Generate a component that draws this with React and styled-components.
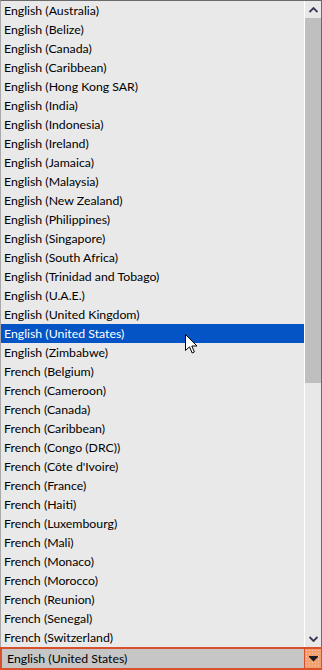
import React from 'react';
import styled, { createGlobalStyle } from 'styled-components';

const GlobalStyle = createGlobalStyle`
  html, body {
    margin: 0;
    padding: 0;
    background: #e9e9e9;
  }
`;

const Frame = styled.div`
  position: relative;
  width: 322px;
  height: 670px;
  display: flex;
  flex-direction: column;
  font-family: "Segoe UI", Lato, "Liberation Sans", sans-serif;
  font-size: 12.3px;
  overflow: hidden;
`;

const ListArea = styled.div`
  display: flex;
  height: 646px;
  border-top: 1px solid #6a6a6a;
  border-left: 1px solid #a8a8a8;
  border-right: 1px solid #6a6a6a;
`;

const List = styled.ul`
  flex: 1;
  margin: 0;
  padding: 0;
  list-style: none;
  background: #e9e9e9;
`;

const Row = styled.li`
  height: 19px;
  line-height: 19px;
  padding-left: 3px;
  white-space: nowrap;
  color: ${(p) => (p.$selected ? '#ffffff' : '#000000')};
  background: ${(p) => (p.$selected ? '#0554c6' : 'transparent')};
`;

const Scrollbar = styled.div`
  width: 16px;
  display: flex;
  flex-direction: column;
  border-left: 1px solid #ffffff;
  background: #e8e8e8;
`;

const ArrowButton = styled.div`
  height: 17px;
  display: flex;
  align-items: center;
  justify-content: center;
`;

const Track = styled.div`
  flex: 1;
  display: flex;
  flex-direction: column;
`;

const Thumb = styled.div`
  height: 365px;
  background: #bfbfbf;
`;

const Combo = styled.div`
  height: 23px;
  display: flex;
  box-sizing: border-box;
  border: 2px solid #d8512c;
  border-right-width: 1px;
  background: #c6c6c6;
`;

const ComboText = styled.div`
  flex: 1;
  padding-left: 5px;
  line-height: 19px;
  color: #000;
`;

const DropButton = styled.div`
  width: 16px;
  display: flex;
  align-items: center;
  justify-content: center;
  border-left: 1px solid #d8512c;
  background-color: #f2a06c;
  background-image: radial-gradient(circle, #f6c0c8 0.6px, transparent 0.9px);
  background-size: 3px 3px;
`;

const Cursor = styled.svg`
  position: absolute;
  left: 185px;
  top: 334px;
`;

const items = [
  'English (Australia)',
  'English (Belize)',
  'English (Canada)',
  'English (Caribbean)',
  'English (Hong Kong SAR)',
  'English (India)',
  'English (Indonesia)',
  'English (Ireland)',
  'English (Jamaica)',
  'English (Malaysia)',
  'English (New Zealand)',
  'English (Philippines)',
  'English (Singapore)',
  'English (South Africa)',
  'English (Trinidad and Tobago)',
  'English (U.A.E.)',
  'English (United Kingdom)',
  'English (United States)',
  'English (Zimbabwe)',
  'French (Belgium)',
  'French (Cameroon)',
  'French (Canada)',
  'French (Caribbean)',
  'French (Congo (DRC))',
  "French (Côte d'Ivoire)",
  'French (France)',
  'French (Haiti)',
  'French (Luxembourg)',
  'French (Mali)',
  'French (Monaco)',
  'French (Morocco)',
  'French (Reunion)',
  'French (Senegal)',
  'French (Switzerland)',
];

const selected = 'English (United States)';

export default function App() {
  return (
    <Frame>
      <GlobalStyle />
      <ListArea>
        <List>
          {items.map((item) => (
            <Row key={item} $selected={item === selected}>
              {item}
            </Row>
          ))}
        </List>
        <Scrollbar>
          <ArrowButton>
            <svg width="9" height="6" viewBox="0 0 9 6">
              <path d="M0.5 5 L4.5 1 L8.5 5" fill="none" stroke="#3b3450" strokeWidth="1.8" />
            </svg>
          </ArrowButton>
          <Track>
            <Thumb />
          </Track>
          <ArrowButton>
            <svg width="9" height="6" viewBox="0 0 9 6">
              <path d="M0.5 1 L4.5 5 L8.5 1" fill="none" stroke="#3b3450" strokeWidth="1.8" />
            </svg>
          </ArrowButton>
        </Scrollbar>
      </ListArea>
      <Combo>
        <ComboText>{selected}</ComboText>
        <DropButton>
          <svg width="9" height="6" viewBox="0 0 9 6">
            <path d="M0 0 H9 V1 L4.5 5.5 L0 1 Z" fill="#1e1a24" />
          </svg>
        </DropButton>
      </Combo>
      <Cursor width="13" height="20" viewBox="0 0 13 20">
        <path
          d="M0.5 0.5 L0.5 16.5 L4.5 12.8 L7.2 19 L9.4 18 L6.8 12 L12 12 Z"
          fill="#ffffff"
          stroke="#000000"
          strokeWidth="1"
          strokeLinejoin="miter"
        />
      </Cursor>
    </Frame>
  );
}
